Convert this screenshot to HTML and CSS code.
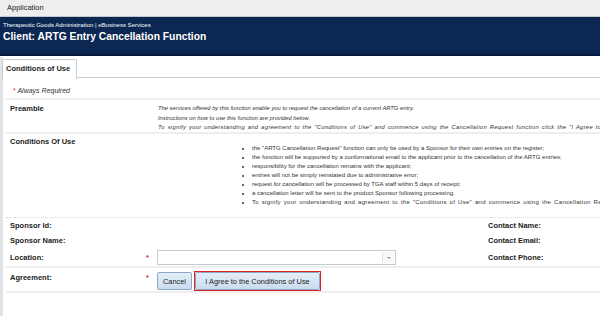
FILE: index.html
```html
<!DOCTYPE html>
<html lang="en">
  <head>
    <title>Client: ARTG Entry Cancellation Function</title>
    <meta charset="UTF-8">
    <link rel="stylesheet" href="styles.css">
  </head>
  <body>
    <div class="appbar">Application</div>
    <div class="header">
        <div class="sub">Therapeutic Goods Administration | eBusiness Services</div>
        <div class="title">Client: ARTG Entry Cancellation Function</div>
    </div>
    <div class="main">
        <div class="tabs">
            <div class="tab">Conditions of Use</div>
        </div>

        <div class="form">
            <div class="note"><span class="star">*</span> Always Required</div>

            <div class="row preamble">
                <div class="label">Preamble</div>
                <div class="text">
                    <p>The services offered by this function enable you to request the cancellation of a current ARTG entry.</p>
                    <p>Instructions on how to use this function are provided below.</p>
                    <p class="wide">To signify your understanding and agreement to the "Conditions of Use" and commence using the Cancellation Request function click the "I Agree to the Conditions of Use" button.</p>
                </div>
            </div>

            <div class="row conditions">
                <div class="label">Conditions Of Use</div>
                <ul class="list">
                    <li>the "ARTG Cancellation Request" function can only be used by a Sponsor for their own entries on the register;</li>
                    <li>the function will be supported by a conformational email to the applicant prior to the cancellation of the ARTG entries;</li>
                    <li>responsibility for the cancellation remains with the applicant;</li>
                    <li>entries will not be simply reinstated due to administrative error;</li>
                    <li>request for cancellation will be processed by TGA staff within 5 days of receipt;</li>
                    <li>a cancellation letter will be sent to the product Sponsor following processing.</li>
                    <li class="wide">To signify your understanding and agreement to the "Conditions of Use" and commence using the Cancellation Request function click the "I Agree" button.</li>
                </ul>
            </div>

            <div class="sponsor">
                <div class="label">Sponsor Id:</div>
                <div></div>
                <div class="label">Contact Name:</div>

                <div class="label">Sponsor Name:</div>
                <div></div>
                <div class="label">Contact Email:</div>

                <div class="label req">Location: <span class="star">*</span></div>
                <div class="select"><span class="arrow"></span></div>
                <div class="label">Contact Phone:</div>
            </div>

            <div class="row agreement">
                <div class="label req">Agreement: <span class="star">*</span></div>
                <div class="buttons">
                    <button class="btn">Cancel</button>
                    <span class="focus"><button class="btn">I Agree to the Conditions of Use</button></span>
                </div>
            </div>
        </div>
    </div>
  </body>
</html>
```
FILE: styles.css
```css
*{
    margin: 0;
    padding: 0;
    box-sizing: border-box;
}
html,body{width: 100%;height: 100%;}
body{
    font-family: "Liberation Sans", Arial, sans-serif;
    color: #222;
    background: #fff;
    overflow: hidden;
}
.appbar{
    height: 17px;
    line-height: 16px;
    padding-left: 7px;
    font-size: 7.5px;
    color: #222;
    background: #eeeeee;
    border-bottom: 1px solid #c4c7cc;
}
.header{
    height: 39px;
    padding: 4px 3px 0;
    background: #0b2752;
    border-bottom: 2px solid #051a3c;
    color: #fff;
}
.sub{
    font-size: 6px;
    line-height: 8px;
}
.title{
    margin-top: 1px;
    font-size: 10.3px;
    font-weight: bold;
    line-height: 13px;
}
.main{
    margin-top: 1px;
    border-left: 3px solid #dfe4ea;
    height: calc(100% - 57px);
}
.tabs{
    height: 21px;
    padding-top: 2px;
    border-bottom: 1px solid #c8ccd2;
    display: flex;
}
.tab{
    margin-left: -1px;
    width: 75px;
    height: 20px;
    padding-left: 3px;
    line-height: 18px;
    font-size: 7.5px;
    font-weight: bold;
    background: #fff;
    border: 1px solid #c8ccd2;
    border-bottom: none;
    border-radius: 2px 2px 0 0;
}
.form{
    padding-left: 3px;
}
.note{
    height: 22px;
    padding: 9px 0 0 7px;
    font-size: 7px;
    font-style: italic;
    color: #333;
    border-bottom: 2px solid #eeeeee;
}
.star{
    color: #e02020;
    font-style: normal;
}
.row{
    display: grid;
    grid-template-columns: 152px 1fr;
    border-bottom: 2px solid #eeeeee;
}
.label{
    padding-left: 4px;
    font-size: 7.5px;
    font-weight: bold;
    color: #222;
    white-space: nowrap;
}
.req{
    display: flex;
    justify-content: space-between;
    padding-right: 9px;
}
.preamble{
    height: 34px;
    padding-top: 4px;
}
.text{
    font-size: 5.8px;
    font-style: italic;
    line-height: 9.5px;
    color: #333;
    white-space: nowrap;
    overflow: hidden;
}
.wide{
    letter-spacing: 0.3px;
    word-spacing: 0.9px;
}
.conditions{
    height: 84px;
    padding-top: 3px;
    border-bottom: 1px dotted #d8d8d8;
}
.list{
    padding-left: 94px;
    margin-top: 7px;
    font-size: 6px;
    line-height: 9px;
    color: #333;
    white-space: nowrap;
    overflow: hidden;
}
.sponsor{
    display: grid;
    grid-template-columns: 152px 330px 1fr;
    grid-template-rows: 14px 16px 18px;
    align-items: center;
    height: 50px;
    border-bottom: 2px solid #eeeeee;
}
.sponsor .label:nth-child(3n){
    padding-left: 0;
}
.select{
    width: 239px;
    height: 15px;
    border: 1px solid #c6c9ce;
    background: #fff;
    position: relative;
    margin-left: -1px;
}
.arrow{
    position: absolute;
    right: 1px;
    top: 1px;
    width: 12px;
    height: 11px;
    border-left: 1px solid #e2e4e8;
    background: #f6f7f9;
}
.arrow::after{
    content: "";
    position: absolute;
    left: 4px;
    top: 5px;
    border-left: 2px solid transparent;
    border-right: 2px solid transparent;
    border-top: 2px solid #8c96a4;
}
.agreement{
    height: 25px;
    padding-top: 5px;
}
.buttons{
    display: flex;
    align-items: flex-start;
    margin-left: -1px;
    margin-top: -1px;
    gap: 2px;
}
.btn{
    height: 18px;
    padding: 0 5px;
    font-family: "Liberation Sans", Arial, sans-serif;
    font-size: 7.4px;
    color: #222;
    background: linear-gradient(#e4eef8, #c9dcef);
    border: 1px solid #8ea9c8;
    border-radius: 2px;
}
.focus{
    display: flex;
    margin-top: -1px;
    border: 1px solid #e02020;
}
.focus .btn{
    width: 125px;
}
```
